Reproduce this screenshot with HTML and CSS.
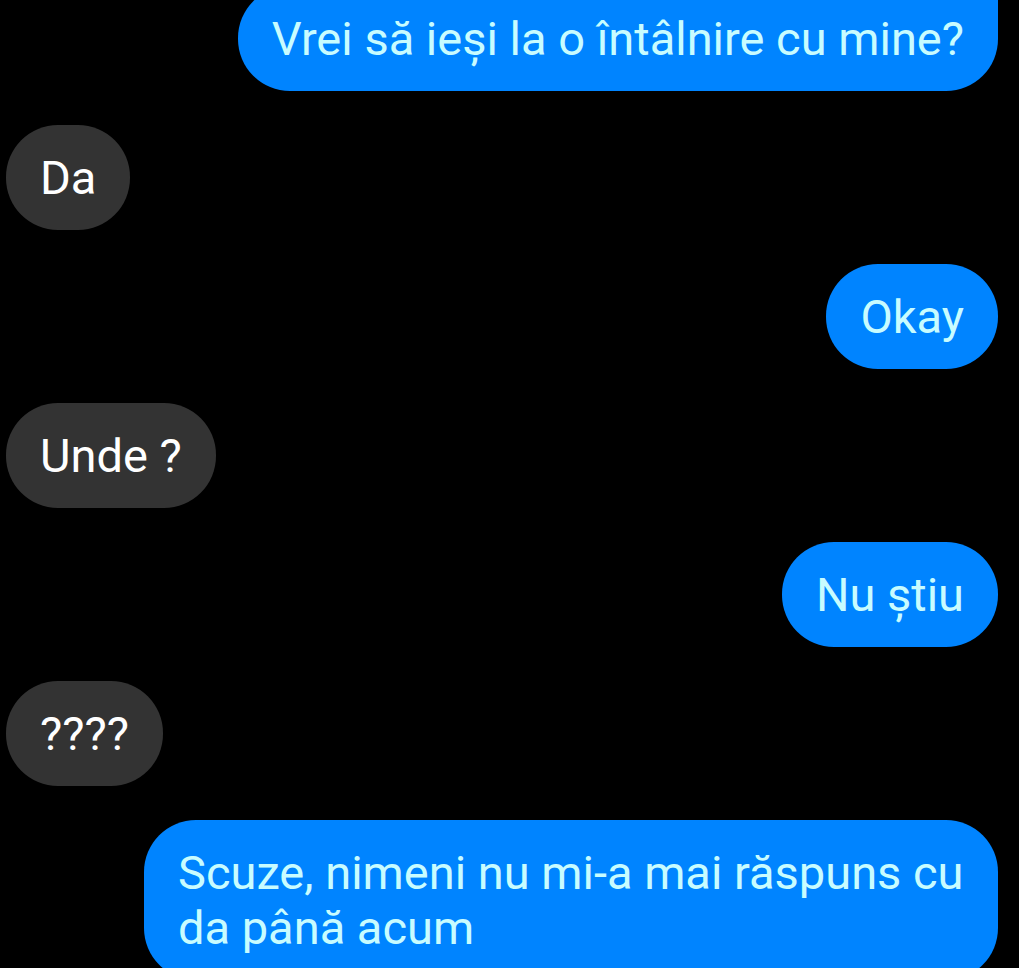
FILE: index.html
```html
<!DOCTYPE html>
<html lang="ro">
<head>
    <meta charset="UTF-8">
    <meta name="viewport" content="width=device-width, initial-scale=1.0">
    <title>Chat</title>
    <link rel="stylesheet" href="styles.css">
</head>
<body>
    <main class="chat">
        <p class="message sent first">Vrei să ieși la o întâlnire cu mine?</p>
        <p class="message received">Da</p>
        <p class="message sent">Okay</p>
        <p class="message received">Unde ?</p>
        <p class="message sent">Nu știu</p>
        <p class="message received">????</p>
        <p class="message sent">Scuze, nimeni nu mi-a mai răspuns cu da până acum</p>
    </main>
</body>
</html>
```

FILE: styles.css
```css
body {
    margin: 0;
    font-family: Roboto, sans-serif;
    background-color: #000;
    color: #fff;
    height: 100vh;
    overflow: hidden;
}

.chat {
    display: flex;
    flex-direction: column;
    align-items: flex-start;
    gap: 34px;
    padding: 0 21px 0 6px;
}

.message {
    box-sizing: border-box;
    margin: 0;
    max-width: 854px;
    padding: 25px 34px;
    border-radius: 52px;
    font-size: 47px;
    line-height: 55px;
}

.received {
    background-color: #333;
}

.sent {
    align-self: flex-end;
    background-color: #0084ff;
    color: #c8fcff;
}

.first {
    margin-top: -14px;
    border-top-right-radius: 12px;
}
```
